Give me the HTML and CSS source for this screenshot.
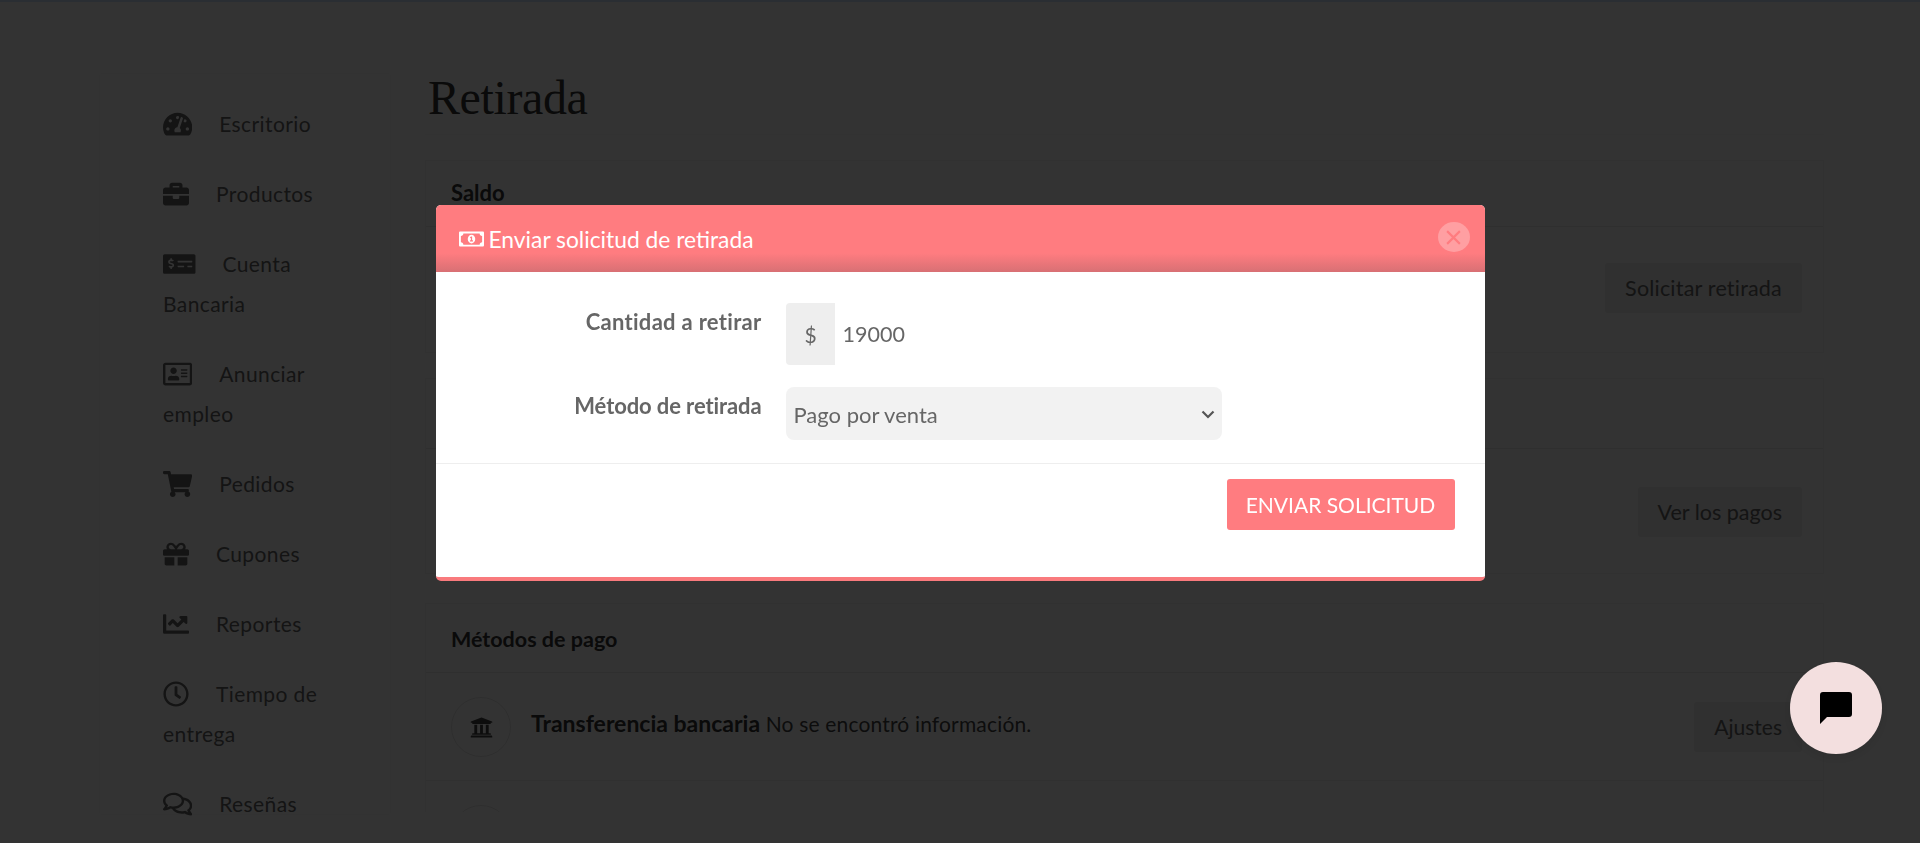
FILE: index.html
```html
<!DOCTYPE html>
<html lang="es">
<head>
<meta charset="utf-8">
<title>Retirada</title>
<link rel="stylesheet" href="styles.css">
</head>
<body>
<div class="topbar"></div>
<div class="layout">
  <nav class="sidebar">
    <a class="nav-item"><svg class="ico" style="width:29.25px" viewBox="0 0 576 512"><path d="M288 32C128.94 32 0 160.94 0 320c0 52.8 14.25 102.26 39.06 144.8 5.61 9.62 16.3 15.2 27.44 15.2h443c11.14 0 21.83-5.58 27.44-15.2C561.75 422.26 576 372.8 576 320c0-159.06-128.94-288-288-288zm0 64c14.71 0 26.58 10.13 30.32 23.65-1.11 2.26-2.64 4.23-3.45 6.67l-9.22 27.67c-5.13 3.49-10.97 6.01-17.64 6.01-17.67 0-32-14.33-32-32S270.33 96 288 96zM96 384c-17.67 0-32-14.33-32-32s14.33-32 32-32 32 14.33 32 32-14.33 32-32 32zm48-160c-17.67 0-32-14.33-32-32s14.33-32 32-32 32 14.33 32 32-14.33 32-32 32zm246.77-72.41l-61.33 184C343.13 347.33 352 364.54 352 384c0 11.72-3.38 22.55-8.88 32H232.88c-5.5-9.45-8.88-20.28-8.88-32 0-33.94 26.5-61.43 59.9-63.59l61.34-184.01c4.17-12.56 17.73-19.45 30.36-15.17 12.57 4.19 19.35 17.79 15.17 30.36zm14.66 57.2l15.52-46.55c3.47-1.29 7.13-2.23 11.05-2.23 17.67 0 32 14.33 32 32s-14.33 32-32 32c-11.38-.01-20.89-6.28-26.57-15.22zM480 384c-17.67 0-32-14.33-32-32s14.33-32 32-32 32 14.33 32 32-14.33 32-32 32z"/></svg>Escritorio</a>
    <a class="nav-item"><svg class="ico" style="width:26px" viewBox="0 0 512 512"><path d="M320 336c0 8.84-7.16 16-16 16h-96c-8.84 0-16-7.16-16-16v-48H0v144c0 25.6 22.4 48 48 48h416c25.6 0 48-22.4 48-48V288H320v48zm144-208h-80V80c0-25.6-22.4-48-48-48H176c-25.6 0-48 22.4-48 48v48H48c-25.6 0-48 22.4-48 48v80h512v-80c0-25.6-22.4-48-48-48zm-144 0H192V96h128v32z"/></svg>Productos</a>
    <a class="nav-item"><svg class="ico" style="width:32.5px" viewBox="0 0 640 512"><path d="M608 64H32C14.33 64 0 78.33 0 96v320c0 17.67 14.33 32 32 32h576c17.67 0 32-14.33 32-32V96c0-17.67-14.33-32-32-32zM176 327.88V344c0 4.42-3.58 8-8 8h-16c-4.42 0-8-3.58-8-8v-16.29c-11.29-.58-22.27-4.52-31.37-11.35-3.9-2.93-4.1-8.77-.57-12.14l11.75-11.21c2.77-2.64 6.89-2.76 10.13-.73 3.87 2.42 8.26 3.72 12.82 3.72h28.11c6.5 0 11.8-5.92 11.8-13.19 0-5.95-3.61-11.19-8.77-12.73l-45-13.5c-18.59-5.58-31.58-23.42-31.58-43.39 0-24.52 19.05-44.44 42.67-45.07V152c0-4.42 3.58-8 8-8h16c4.42 0 8 3.58 8 8v16.29c11.29.58 22.27 4.51 31.37 11.35 3.9 2.93 4.1 8.77.57 12.14l-11.75 11.21c-2.77 2.64-6.89 2.76-10.13.73-3.87-2.43-8.26-3.72-12.82-3.72h-28.11c-6.5 0-11.8 5.92-11.8 13.19 0 5.95 3.61 11.19 8.77 12.73l45 13.5c18.59 5.58 31.58 23.42 31.58 43.39 0 24.53-19.05 44.44-42.67 45.07zM416 312c0 4.42-3.58 8-8 8H296c-4.42 0-8-3.58-8-8v-16c0-4.42 3.58-8 8-8h112c4.42 0 8 3.58 8 8v16zm160 0c0 4.42-3.58 8-8 8h-80c-4.42 0-8-3.58-8-8v-16c0-4.42 3.58-8 8-8h80c4.42 0 8 3.58 8 8v16zm0-96c0 4.42-3.58 8-8 8H296c-4.42 0-8-3.58-8-8v-16c0-4.42 3.58-8 8-8h272c4.42 0 8 3.58 8 8v16z"/></svg>Cuenta Bancaria</a>
    <a class="nav-item"><svg class="ico" style="width:29.25px" viewBox="0 0 576 512"><path d="M528 32H48C21.5 32 0 53.5 0 80v352c0 26.5 21.5 48 48 48h480c26.5 0 48-21.5 48-48V80c0-26.5-21.5-48-48-48zm0 400H48V80h480v352zM208 256c35.3 0 64-28.7 64-64s-28.7-64-64-64-64 28.7-64 64 28.7 64 64 64zm-89.6 128h179.2c12.4 0 22.4-8.6 22.4-19.2v-19.2c0-31.8-30.1-57.6-67.2-57.6-10.8 0-18.7 8-44.8 8-26.9 0-33.4-8-44.8-8-37.1 0-67.2 25.8-67.2 57.6v19.2c0 10.6 10 19.2 22.4 19.2zM360 320h112c4.4 0 8-3.6 8-8v-16c0-4.4-3.6-8-8-8H360c-4.4 0-8 3.6-8 8v16c0 4.4 3.6 8 8 8zm0-64h112c4.4 0 8-3.6 8-8v-16c0-4.4-3.6-8-8-8H360c-4.4 0-8 3.6-8 8v16c0 4.4 3.6 8 8 8zm0-64h112c4.4 0 8-3.6 8-8v-16c0-4.4-3.6-8-8-8H360c-4.4 0-8 3.6-8 8v16c0 4.4 3.6 8 8 8z"/></svg>Anunciar empleo</a>
    <a class="nav-item"><svg class="ico" style="width:29.25px" viewBox="0 0 576 512"><path d="M528.12 301.319l47.273-208C578.806 78.301 567.391 64 551.99 64H159.208l-9.166-44.81C147.758 8.021 137.93 0 126.529 0H24C10.745 0 0 10.745 0 24v16c0 13.255 10.745 24 24 24h69.883l70.248 343.435C147.325 417.1 136 435.222 136 456c0 30.928 25.072 56 56 56s56-25.072 56-56c0-15.674-6.447-29.835-16.824-40h209.647C430.447 426.165 424 440.326 424 456c0 30.928 25.072 56 56 56s56-25.072 56-56c0-22.172-12.888-41.332-31.579-50.405l5.517-24.276c3.413-15.018-8.002-29.319-23.403-29.319H218.117l-6.545-32h293.145c11.206 0 20.92-7.754 23.403-18.681z"/></svg>Pedidos</a>
    <a class="nav-item"><svg class="ico" style="width:26px" viewBox="0 0 512 512"><path d="M32 448c0 17.7 14.3 32 32 32h160V320H32v128zm256 32h160c17.7 0 32-14.3 32-32V320H288v160zm192-320h-42.1c6.2-12.1 10.1-25.5 10.1-40 0-48.5-39.5-88-88-88-41.6 0-68.5 21.3-103 68.3-34.5-47-61.4-68.3-103-68.3-48.5 0-88 39.5-88 88 0 14.5 3.8 27.9 10.1 40H32c-17.7 0-32 14.3-32 32v80c0 8.8 7.2 16 16 16h480c8.8 0 16-7.2 16-16v-80c0-17.7-14.3-32-32-32zm-326.1 0c-22.1 0-40-17.9-40-40s17.9-40 40-40c19.9 0 34.6 3.3 86.1 80h-86.1zm206.1 0h-86.1c51.4-76.5 65.7-80 86.1-80 22.1 0 40 17.9 40 40s-17.9 40-40 40z"/></svg>Cupones</a>
    <a class="nav-item"><svg class="ico" style="width:26px" viewBox="0 0 512 512"><path d="M496 384H64V80c0-8.84-7.16-16-16-16H16C7.16 64 0 71.16 0 80v336c0 17.67 14.33 32 32 32h464c8.84 0 16-7.16 16-16v-32c0-8.84-7.16-16-16-16zM464 96H345.94c-21.38 0-32.09 25.85-16.97 40.97l32.4 32.4L288 242.75l-73.37-73.37c-12.5-12.5-32.76-12.5-45.25 0l-68.69 68.69c-6.25 6.25-6.25 16.38 0 22.63l22.62 22.62c6.25 6.25 16.38 6.25 22.63 0L192 237.25l73.37 73.37c12.5 12.5 32.76 12.5 45.25 0l96-96 32.4 32.4c15.12 15.12 40.97 4.41 40.97-16.97V112c.01-8.84-7.15-16-15.99-16z"/></svg>Reportes</a>
    <a class="nav-item"><svg class="ico" style="width:26px" viewBox="0 0 512 512"><path d="M256 8C119 8 8 119 8 256s111 248 248 248 248-111 248-248S393 8 256 8zm0 448c-110.5 0-200-89.5-200-200S145.5 56 256 56s200 89.5 200 200-89.5 200-200 200zm61.8-104.4l-84.9-61.7c-3.1-2.3-4.9-5.9-4.9-9.7V116c0-6.6 5.4-12 12-12h32c6.6 0 12 5.4 12 12v141.7l66.8 48.6c5.4 3.9 6.5 11.4 2.6 16.8L334.6 349c-3.9 5.3-11.4 6.5-16.8 2.6z"/></svg>Tiempo de entrega</a>
    <a class="nav-item"><svg class="ico" style="width:29.25px" viewBox="0 0 576 512"><path d="M532 386.2c27.5-27.1 44-61.1 44-98.2 0-80-76.5-146.1-176.2-157.9C368.3 72.5 294.3 32 208 32 93.1 32 0 103.6 0 192c0 37 16.5 71 44 98.2-15.3 30.7-37.3 54.5-37.7 54.9-6.3 6.7-8.1 16.5-4.4 25 3.6 8.5 12 14 21.2 14 53.5 0 96.7-20.2 125.2-38.8 9.2 2.1 18.7 3.7 28.4 4.9C208.1 407.6 281.8 448 368 448c20.8 0 40.8-2.4 59.8-6.8C456.3 459.7 499.4 480 553 480c9.2 0 17.5-5.5 21.2-14 3.6-8.5 1.9-18.3-4.4-25-.4-.3-22.5-24.1-37.8-54.8zm-392.8-92.3L122.1 305c-14.1 9.1-28.5 16.3-43.1 21.4 2.7-4.7 5.4-9.7 8-14.8l15.5-31.1L77.7 256C64.2 242.6 48 220.7 48 192c0-60.7 73.3-112 160-112s160 51.3 160 112-73.3 112-160 112c-16.5 0-33-1.9-49-5.6l-19.8-4.5zM498.3 352l-24.7 24.4 15.5 31.1c2.6 5.1 5.3 10.1 8 14.8-14.6-5.1-29-12.3-43.1-21.4l-17.1-11.1-19.9 4.6c-16 3.7-32.5 5.6-49 5.6-54 0-102.2-20.1-131.3-49.7C338 339.5 416 272.9 416 192c0-3.4-.4-6.7-.7-10C479.7 196.5 528 238.8 528 288c0 28.7-16.2 50.6-29.7 64z"/></svg>Reseñas</a>
  </nav>
  <main class="main">
    <h1 class="page-title">Retirada</h1>
    <section class="card">
      <header class="card-head card-head-a">Saldo</header>
      <div class="row row-a"><span class="btn-soft">Solicitar retirada</span></div>
    </section>
    <section class="card">
      <header class="card-head card-head-b"></header>
      <div class="row row-b"><span class="btn-soft">Ver los pagos</span></div>
    </section>
    <section class="card card-methods">
      <header class="card-head card-head-c">Métodos de pago</header>
      <div class="row row-c">
        <div class="method">
          <span class="circle"><svg class="bank" viewBox="0 0 512 512"><path d="M496 128v16a8 8 0 0 1-8 8h-24v12c0 6.627-5.373 12-12 12H60c-6.627 0-12-5.373-12-12v-12H24a8 8 0 0 1-8-8v-16a8 8 0 0 1 4.941-7.392l232-88a7.996 7.996 0 0 1 6.118 0l232 88A8 8 0 0 1 496 128zm-24 304H40c-13.255 0-24 10.745-24 24v16a8 8 0 0 0 8 8h464a8 8 0 0 0 8-8v-16c0-13.255-10.745-24-24-24zM96 192v192H60c-6.627 0-12 5.373-12 12v20h416v-20c0-6.627-5.373-12-12-12h-36V192h-64v192h-64V192h-64v192h-64V192H96z"/></svg></span>
          <p class="method-text"><strong>Transferencia bancaria</strong> No se encontró información.</p>
        </div>
        <span class="btn-soft">Ajustes</span>
      </div>
      <div class="row row-c"><span class="circle"></span></div>
    </section>
  </main>
</div>

<div class="backdrop">
  <div class="modal">
    <div class="modal-head">
      <h2 class="modal-title"><svg class="bill" viewBox="0 0 640 512"><path d="M320 144c-53.02 0-96 50.14-96 112 0 61.85 42.98 112 96 112 53 0 96-50.13 96-112 0-61.86-42.98-112-96-112zm40 168c0 4.42-3.58 8-8 8h-64c-4.42 0-8-3.58-8-8v-16c0-4.42 3.58-8 8-8h16v-55.44l-.47.31a7.992 7.992 0 0 1-11.09-2.22l-8.88-13.31a7.992 7.992 0 0 1 2.22-11.09l15.33-10.22a23.99 23.99 0 0 1 13.31-4.03H328c4.42 0 8 3.58 8 8v88h16c4.42 0 8 3.58 8 8v16zM608 64H32C14.33 64 0 78.33 0 96v320c0 17.67 14.33 32 32 32h576c17.67 0 32-14.33 32-32V96c0-17.67-14.33-32-32-32zm-16 272c-35.35 0-64 28.65-64 64H112c0-35.35-28.65-64-64-64V176c35.35 0 64-28.65 64-64h416c0 35.35 28.65 64 64 64v160z"/></svg>Enviar solicitud de retirada</h2>
      <span class="close"><svg viewBox="0 0 16 16"><path d="M2 2l12 12M14 2L2 14"/></svg></span>
    </div>
    <form class="modal-body">
      <div class="field field-amount">
        <label class="field-label">Cantidad a retirar</label>
        <div class="input-group">
          <span class="addon">$</span>
          <input class="amount" type="text" value="19000">
        </div>
      </div>
      <div class="field">
        <label class="field-label field-label-tight">Método de retirada</label>
        <div class="select-wrap">
          <select class="method-select"><option>Pago por venta</option></select>
          <svg class="chevron" viewBox="0 0 14 9"><path d="M1.5 1.5L7 7l5.5-5.5"/></svg>
        </div>
      </div>
    </form>
    <div class="modal-foot"><button class="btn-send" type="button">ENVIAR SOLICITUD</button></div>
  </div>
</div>

<button class="chat" type="button" aria-label="Chat"><svg viewBox="0 0 32 32"><path d="M3 0h26a3 3 0 0 1 3 3v19a3 3 0 0 1-3 3H7l-7 7V3a3 3 0 0 1 3-3z"/></svg></button>
</body>
</html>
```
FILE: styles.css
```css
* { box-sizing: border-box; }
html, body { margin: 0; height: 100%; overflow: hidden; }
body { background: #fff; font-family: "Lato", "Liberation Sans", sans-serif; color: #666; }

.topbar { height: 2px; background: #d2e6ff; }

.layout { display: flex; align-items: flex-start; height: 841px; overflow: hidden; padding-left: 100px; }

.sidebar {
  flex: 0 0 290px; height: 740px; margin-top: 72px; padding: 30px 50px 0 63px;
  box-shadow: 0 0 3px rgba(0,0,0,.06);
  display: flex; flex-direction: column; gap: 30px;
}
.nav-item { display: block; font-size: 21px; letter-spacing: .4px; line-height: 40px; color: #666; }
.ico { height: 26px; margin-right: 27px; vertical-align: -5px; fill: #666; }

.main { flex: 0 0 1399px; height: 810px; overflow: hidden; margin-left: 35px; }
.page-title {
  margin: 0; height: 133px; padding: 71px 0 0 3px;
  font: 400 48px/50px "Liberation Serif", serif; letter-spacing: -.4px; color: #333;
  border-bottom: 1px solid #f7f7f7;
}
.card { border: 1px solid #f5f5f5; margin-top: 25px; }
.card-methods { margin-top: 29px; }
.card-head {
  display: flex; align-items: center; padding: 0 25px; font-size: 21.5px; font-weight: 700; color: #333;
  border-bottom: 1px solid #e8e8e8;
}
.card-head-a { height: 66px; padding-bottom: 3px; font-size: 22px; }
.card-head-b { height: 70px; }
.card-head-c { height: 69px; padding-top: 2px; }
.row { display: flex; align-items: center; justify-content: space-between; padding: 0 21px 0 25px; }
.row-a { height: 125px; padding-bottom: 3px; justify-content: flex-end; }
.row-b { height: 124px; padding-top: 2px; justify-content: flex-end; }
.row-c { height: 108px; border-bottom: 1px solid #f0f0f0; align-items: flex-start; padding-top: 24px; }
.btn-soft { display: inline-block; height: 50px; padding: 0 20px; background: #ededed; border-radius: 3px; font-size: 21.5px; letter-spacing: .2px; line-height: 50px; color: #666; }
.row-b .btn-soft { letter-spacing: 0; }
.row-c .btn-soft { margin-top: 5px; font-size: 21px; letter-spacing: 0; }
.method { display: flex; gap: 20px; }
.circle { flex: none; display: flex; align-items: center; justify-content: center; width: 60px; height: 60px; border: 1px solid #e5e5e5; border-radius: 50%; }
.bank { width: 23px; height: 23px; fill: #444; }
.method-text { margin: 14px 0 0; font-size: 21px; letter-spacing: .17px; line-height: 24px; color: #444; }
.method-text strong { font-size: 23px; letter-spacing: 0; color: #333; }

.backdrop { position: fixed; inset: 0; background: rgba(0,0,0,.8); display: flex; justify-content: center; align-items: flex-start; padding-top: 205px; }
.modal { width: 1049px; height: 376px; background: #fff; border-radius: 5px; border-bottom: 4px solid #f97a7d; overflow: hidden; }
.modal-head {
  height: 67px; display: flex; align-items: center; justify-content: space-between; padding: 1px 15px 0 23px;
  background: linear-gradient(#ff7c80 0, #ff7c80 72%, #d87074 100%);
}
.modal-title { margin: 0; display: flex; align-items: center; font: 400 22.8px/30px "Lato", sans-serif; color: #fff; }
.bill { width: 25px; height: 20px; margin-right: 5px; fill: #fff; }
.close { display: flex; align-items: center; justify-content: center; width: 32px; height: 30px; margin-top: -4px; border-radius: 50%; background: #ff9fa2; }
.close svg { width: 17px; height: 17px; fill: none; stroke: #ff7c80; stroke-width: 2; }

.modal-body { height: 192px; padding-top: 31px; border-bottom: 1px solid #eee; }
.field { display: flex; gap: 24px; align-items: flex-start; }
.field-amount { height: 84px; }
.field-label { flex: 0 0 326px; text-align: right; font-size: 22px; letter-spacing: .3px; font-weight: 700; line-height: 37px; color: #666; }
.field-label-tight { letter-spacing: -.1px; }
.input-group { display: flex; height: 62px; }
.addon { width: 49px; display: flex; align-items: center; justify-content: center; padding-left: 1px; background: #eee; border-radius: 4px 0 0 4px; font-size: 21px; color: #666; }
.amount { width: 300px; border: 0; outline: 0; padding: 0 8px; background: transparent; font: 400 21.5px "Lato", sans-serif; color: #666; }
.select-wrap { position: relative; width: 436px; height: 53px; }
.method-select { width: 100%; height: 100%; padding: 2px 8px 0; border: 0; outline: 0; border-radius: 8px; background-color: #f2f2f2; appearance: none; font: 400 22px "Lato", sans-serif; color: #666; }
.chevron { position: absolute; right: 7px; top: 23px; width: 14px; height: 9px; fill: none; stroke: #555; stroke-width: 2.2; pointer-events: none; }

.modal-foot { display: flex; justify-content: flex-end; padding: 15px 30px 0 0; }
.btn-send { width: 228px; height: 51px; border: 0; border-radius: 3px; background: #ff7c80; font: 400 21px "Lato", sans-serif; color: #fff; }

.chat { position: fixed; left: 1790px; top: 662px; width: 92px; height: 92px; padding: 0; border: 0; border-radius: 50%; background: #f3dfdf; box-shadow: 0 4px 14px rgba(0,0,0,.1); display: flex; align-items: center; justify-content: center; }
.chat svg { width: 32px; height: 32px; fill: #000; }
```
